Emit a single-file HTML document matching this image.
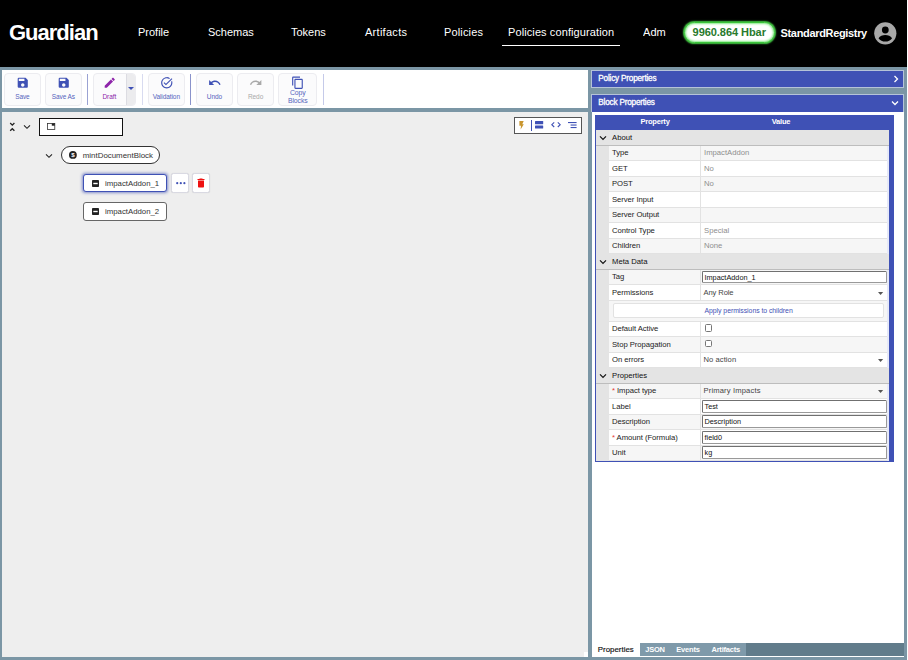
<!DOCTYPE html>
<html><head><meta charset="utf-8"><title>Guardian</title>
<style>
*{box-sizing:border-box;margin:0;padding:0}
html,body{width:908px;height:660px;overflow:hidden;background:#fff;font-family:"Liberation Sans",sans-serif;}
#page{position:absolute;left:0;top:0;width:907px;height:660px;background:#7b96a5;overflow:hidden}
.abs{position:absolute}
svg{overflow:visible}
#hdr{position:absolute;left:0;top:0;width:907px;height:67px;background:#000;color:#fff}
#logo{position:absolute;left:9px;top:19px;font-weight:bold;font-size:22px;line-height:28px;letter-spacing:-1px;white-space:nowrap}
.nav{position:absolute;top:25px;font-size:11px;line-height:14px;white-space:nowrap;color:#fff}
#bal{position:absolute;left:684px;top:22.3px;width:90.5px;height:21px;border-radius:11px;background:#fff;border:1.5px solid #3cc43c;box-shadow:0 0 1.5px 1px #45cc45, inset 0 0 2px 1px #8aea8a;color:#287a2c;font-weight:bold;font-size:11px;line-height:19.4px;letter-spacing:-0.05px;text-align:center;white-space:nowrap}
#user{position:absolute;left:780.5px;top:25.6px;font-weight:bold;font-size:11px;line-height:14px;white-space:nowrap;letter-spacing:-0.33px}
#left{position:absolute;left:2px;top:70px;width:586.2px;height:586.5px;background:#eeeeee}
#tb{position:absolute;left:0;top:0;width:586.2px;height:38.3px;background:#fff}
#tbline{position:absolute;left:0;top:38.3px;width:586.2px;height:3.5px;background:#7b96a5}
.btn{position:absolute;top:3px;height:33px;border:1px solid #ececf0;border-radius:4px;background:#fbfbfc;color:#5564bd;font-size:6.5px;text-align:center}
.btn svg{position:absolute;left:50%;top:1.5px;margin-left:-6.75px;width:13.5px;height:13.5px;fill:#3f51b5}
.btn span{position:absolute;left:0;right:0;top:18.5px;line-height:8px;white-space:nowrap;letter-spacing:-0.08px}
.sep{position:absolute;top:4px;width:1px;height:31px;background:#9aa2d3}
.node{position:absolute;background:#fff;border:1px solid #333;font-size:7.5px;color:#333;white-space:nowrap}
.node span{position:absolute;top:0;line-height:100%;}
#right{position:absolute;left:592px;top:70px;width:311.5px;height:586.5px;background:#fff}
.ph{position:absolute;left:-1px;width:312.9px;height:17.6px;background:#3f51b5;color:#fff;font-size:8.2px;line-height:15.2px;padding-left:6.3px;font-weight:normal;-webkit-text-stroke:0.3px #fff;letter-spacing:-0.2px;border:1px solid #b5c3d8}
#tbl{position:absolute;left:3px;top:45px;width:299px;height:346.6px;background:#3f51b5}
#tbl .in{position:absolute;left:1px;top:15.4px;width:293px;height:330.4px;background:linear-gradient(90deg,#e4e4e4 0,#e4e4e4 20px,#fff 20px,#fff 291.400px,#e6e9f8 291.400px);overflow:hidden}
.th{position:absolute;top:0;height:14.5px;line-height:14.5px;color:#fff;font-weight:bold;font-size:7.5px;letter-spacing:-0.2px;text-align:center}
.row{position:absolute;left:13px;width:278.4px;height:15.5px;border-bottom:1px solid #e2e2e2;font-size:7.7px;line-height:14.5px;color:#222;white-space:nowrap}
.row.o{background:#f6f6f6}
.row.e{background:#fff}
.row .k{position:absolute;left:3px;top:0.4px;letter-spacing:-0.05px}
.row .v{position:absolute;left:95px;top:0.4px;color:#8e8e8e}
.row .vs{position:absolute;left:94.5px;top:0.3px;color:#444;font-size:7.6px}
.row .cs{position:absolute;left:90.5px;top:0;width:1px;height:100%;background:#e2e2e2}
.grp{position:absolute;left:0;width:293px;height:15.5px;background:#e4e4e4;border-bottom:1px solid #bdbdbd;font-size:7.7px;line-height:14.5px;color:#111;white-space:nowrap}
.grp span{position:absolute;left:16px;top:0.4px}
.grp svg{position:absolute;left:3px;top:3.5px;width:8px;height:8px}
.inp{position:absolute;left:93px;top:0.7px;width:185px;height:12.7px;border:1px solid #858585;border-color:#707070 #999 #999 #707070;border-radius:1.5px;background:#fff;font-size:7.3px;line-height:11.3px;padding-left:1.5px;color:#111}
.chk{position:absolute;left:95.5px;top:2.5px;width:7.7px;height:7.7px;border:1px solid #777;border-radius:1.5px;background:#fff}
.dd{position:absolute;left:268.9px;top:6.5px;width:5.2px;height:2.9px}
.req{color:#e53935}
.tab{position:absolute;top:0;height:13.2px;line-height:13px;font-size:7.5px;font-weight:bold;color:#fff;background:#7f9aaa;text-align:center;letter-spacing:-0.2px}
</style></head><body><div id="page">
<div id="hdr">
 <div id="logo">Guardian</div>
 <div class="nav" style="left:138px">Profile</div>
 <div class="nav" style="left:208px">Schemas</div>
 <div class="nav" style="left:291px">Tokens</div>
 <div class="nav" style="left:365px;letter-spacing:0.28px">Artifacts</div>
 <div class="nav" style="left:444px;letter-spacing:0.14px">Policies</div>
 <div class="nav" style="left:508px;letter-spacing:0.1px">Policies configuration</div>
 <div class="abs" style="left:502px;top:44.500px;width:118px;height:1.500px;background:#fff"></div>
 <div class="nav" style="left:643px;width:23.100px;overflow:hidden;letter-spacing:0.05px">Admin</div>
 <div id="bal">9960.864 Hbar</div>
 <div id="user">StandardRegistry</div>
 <svg class="abs" style="left:873.500px;top:21.800px" width="22.600" height="22.600" viewBox="0 0 24 24"><circle cx="12" cy="12" r="11.800" fill="#a8a8a8"/><circle cx="12" cy="8.500" r="3.600" fill="#000"/><path d="M4.800 17.200c1.600-2.300 4.200-3.400 7.200-3.400s5.600 1.100 7.200 3.400c-1.700 2.300-4.300 3.600-7.200 3.600s-5.500-1.300-7.200-3.600z" fill="#000"/></svg>
</div>
<div id="left"><div id="tb">
<div class="btn" style="left:2px;width:36.8px;"><svg viewBox="0 0 24 24" style=""><path d="M17 3H5a2 2 0 0 0-2 2v14a2 2 0 0 0 2 2h14c1.100 0 2-.9 2-2V7l-4-4zm-5 16c-1.660 0-3-1.340-3-3s1.340-3 3-3 3 1.340 3 3-1.340 3-3 3zm3-10H5V5h10v4z"/></svg><span style="">Save</span></div>
<div class="btn" style="left:43px;width:36.8px;"><svg viewBox="0 0 24 24" style=""><path d="M17 3H5a2 2 0 0 0-2 2v14a2 2 0 0 0 2 2h14c1.100 0 2-.9 2-2V7l-4-4zm-5 16c-1.660 0-3-1.340-3-3s1.340-3 3-3 3 1.340 3 3-1.340 3-3 3zm3-10H5V5h10v4z"/></svg><span style="">Save As</span></div>
<div class="sep" style="left:85px"></div>
<div class="btn" style="left:91.300px;width:42.500px"><div class="abs" style="right:0;top:0;width:9.300px;height:31px;background:#ececee;border-left:1px solid #dcdce2;border-radius:0 3px 3px 0"></div><svg viewBox="0 0 24 24" style="left:15.800px;margin-left:-6.750px;fill:#8e24aa"><path d="M3 17.250V21h3.750L17.810 9.940l-3.750-3.750L3 17.250zM20.710 7.040a1 1 0 0 0 0-1.410l-2.340-2.340a1 1 0 0 0-1.410 0l-1.830 1.830 3.750 3.750 1.830-1.830z"/></svg><span style="right:10.500px;color:#8e24aa">Draft</span><div class="abs" style="left:33.800px;top:13px;width:0;height:0;border-left:3.100px solid transparent;border-right:3.100px solid transparent;border-top:3.100px solid #3f51b5"></div></div>
<div class="sep" style="left:140.300px;background:#d8dbf0"></div>
<div class="btn" style="left:146px;width:36.6px;"><svg viewBox="0 0 24 24" style=""><path d="M22 5.180 10.590 16.600l-4.240-4.240 1.410-1.410 2.830 2.830 10-10L22 5.180zm-2.210 5.040c.13.570.21 1.170.21 1.780 0 4.420-3.580 8-8 8s-8-3.580-8-8 3.580-8 8-8c1.580 0 3.040.46 4.280 1.250l1.440-1.440A9.900 9.900 0 0 0 12 2C6.480 2 2 6.480 2 12s4.480 10 10 10 10-4.480 10-10c0-1.190-.22-2.330-.6-3.390l-1.610 1.610z"/></svg><span style="">Validation</span></div>
<div class="sep" style="left:188.300px;background:#8a93cb"></div>
<div class="btn" style="left:194px;width:36.8px;"><svg viewBox="0 0 24 24" style=""><path d="M12.500 8c-2.650 0-5.050.99-6.900 2.600L2 7v9h9l-3.620-3.620c1.390-1.160 3.160-1.880 5.120-1.880 3.540 0 6.550 2.310 7.600 5.500l2.370-.78C21.080 11.030 17.150 8 12.500 8z"/></svg><span style="">Undo</span></div>
<div class="btn" style="left:235.2px;width:36.8px;"><svg viewBox="0 0 24 24" style="fill:#a9a9a9"><path d="M18.400 10.600C16.550 8.990 14.150 8 11.500 8c-4.650 0-8.580 3.030-9.960 7.220L3.900 16a8 8 0 0 1 7.600-5.500c1.950 0 3.730.72 5.120 1.880L13 16h9V7l-3.600 3.600z"/></svg><span style="color:#a9a9a9;">Redo</span></div>
<div class="btn" style="left:276.3px;width:39px;"><svg viewBox="0 0 24 24" style=""><path d="M16 1H4c-1.100 0-2 .9-2 2v14h2V3h12V1zm3 4H8c-1.100 0-2 .9-2 2v14c0 1.100.9 2 2 2h11c1.100 0 2-.9 2-2V7c0-1.100-.9-2-2-2zm0 16H8V7h11v14z"/></svg><span style="top:15.4px;line-height:7.6px;font-size:6.9px;white-space:normal;">Copy<br>Blocks</span></div>
<div class="sep" style="left:321px;background:#c5cae9"></div>
</div><div id="tbline"></div>
<svg class="abs" style="left:5px;top:52px" width="10" height="10" viewBox="0 0 10 10" fill="none" stroke="#222" stroke-width="1.300"><path d="M3.200 1 5.300 3.100 7.400 1M3.200 8.800 5.300 6.700 7.400 8.800"/></svg>
<svg class="abs" style="left:21px;top:53px" width="8" height="8" viewBox="0 0 8 8" fill="none" stroke="#222" stroke-width="1.100"><path d="M1 2.300 4 5.300 7 2.300"/></svg>
<div class="node" style="left:37px;top:48px;width:84px;height:17.500px;border-color:#111"><svg class="abs" style="left:7px;top:4.300px" width="8.200" height="7" viewBox="0 0 8.200 7"><rect x=".4" y=".4" width="7.400" height="6.200" fill="#fff" stroke="#333" stroke-width=".8"/><rect x="4.800" y=".4" width="3" height="2.300" fill="#222"/></svg></div>
<svg class="abs" style="left:42.700px;top:81.700px" width="8" height="8" viewBox="0 0 8 8" fill="none" stroke="#222" stroke-width="1.100"><path d="M1 2.300 4 5.300 7 2.300"/></svg>
<div class="node" style="left:58.800px;top:76.300px;width:99.400px;height:17.400px;border-radius:9px;line-height:15.400px"><svg class="abs" style="left:7.200px;top:3.800px" width="7.800" height="7.800" viewBox="0 0 10 10"><circle cx="5" cy="5" r="5" fill="#222"/><text x="5" y="8" font-size="8" font-weight="bold" text-anchor="middle" fill="#fff" font-family="Liberation Sans, sans-serif">$</text></svg><span style="left:21px;top:0.600px;line-height:15.400px;font-size:7.900px;letter-spacing:0">mintDocumentBlock</span></div>
<div class="node" style="left:81.200px;top:104.300px;width:84.200px;height:18px;border-radius:3px;border-color:#3f51b5;box-shadow:0 0 3px 0.500px rgba(63,81,181,.6)"><svg class="abs" style="left:7.800px;top:5.200px" width="7" height="7" viewBox="0 0 7 7"><rect width="7" height="7" rx=".8" fill="#222"/><rect x="1.300" y="2.800" width="4.400" height="1.400" fill="#fff"/></svg><span style="left:20.800px;top:0.700px;font-size:7.800px;line-height:16px">impactAddon_1</span></div>
<div class="abs" style="left:169.400px;top:102.800px;width:18px;height:19.800px;background:#fff;border:1px solid #d9d9e2;border-radius:2.500px;box-shadow:0 0 1px rgba(0,0,0,.15)"><svg class="abs" style="left:3.200px;top:7.800px" width="9.600" height="2.400" viewBox="0 0 9.600 2.400"><circle cx="1.200" cy="1.200" r="1.100" fill="#3f51b5"/><circle cx="4.800" cy="1.200" r="1.100" fill="#3f51b5"/><circle cx="8.400" cy="1.200" r="1.100" fill="#3f51b5"/></svg></div>
<div class="abs" style="left:190.200px;top:102.800px;width:18px;height:19.800px;background:#fff;border:1px solid #d9d9e2;border-radius:2.500px;box-shadow:0 0 1px rgba(0,0,0,.15)"><svg class="abs" style="left:2px;top:3px" width="12" height="12" viewBox="0 0 24 24"><path fill="#ee1111" d="M6 19c0 1.100.9 2 2 2h8c1.100 0 2-.9 2-2V7H6v12zM19 4h-3.500l-1-1h-5l-1 1H5v2h14V4z"/></svg></div>
<div class="node" style="left:81.200px;top:132.300px;width:84.200px;height:18.400px;border-radius:3px;border-color:#666"><svg class="abs" style="left:7.800px;top:5.200px" width="7" height="7" viewBox="0 0 7 7"><rect width="7" height="7" rx=".8" fill="#222"/><rect x="1.300" y="2.800" width="4.400" height="1.400" fill="#fff"/></svg><span style="left:20.800px;top:0.700px;font-size:7.800px;line-height:16.400px">impactAddon_2</span></div>
<div class="abs" style="left:512.100px;top:47.100px;width:67.700px;height:16.500px;background:#fff;border:1px solid #555"><svg class="abs" style="left:4.300px;top:2.800px" width="5" height="8.500" viewBox="0 0 5 8.500"><path d="M.4 0h4.300L3.300 3.200h1.500L1.600 8.500 2 4.700H.4z" fill="#c9962e"/></svg><div class="abs" style="left:16.300px;top:2.200px;width:1px;height:10.500px;background:#3f51b5"></div><svg class="abs" style="left:20px;top:3.300px" width="8.200" height="7.600" viewBox="0 0 8.200 7.600"><rect width="8.200" height="3.200" rx=".5" fill="#3f51b5"/><rect y="4.400" width="8.200" height="3.200" rx=".5" fill="#3f51b5"/></svg><svg class="abs" style="left:36px;top:4.400px" width="10" height="5.400" viewBox="0 0 10 5.400" fill="none" stroke="#3f51b5" stroke-width="1.100"><path d="M3.200.4.800 2.700l2.400 2.300M6.800.4l2.400 2.300L6.800 5"/></svg><svg class="abs" style="left:53.200px;top:4px" width="8.600" height="6.200" viewBox="0 0 8.600 6.200"><rect width="8.600" height="1.100" fill="#3f51b5"/><rect x="2.600" y="2.500" width="6" height="1.100" fill="#3f51b5"/><rect x="2.600" y="5" width="6" height="1.100" fill="#3f51b5"/></svg></div>
<div class="abs" style="left:581.700px;top:582px;width:4.500px;height:4.500px;background:#fff"></div>
</div>
<div id="right">
<div class="ph" style="top:0.200px">Policy Properties<svg class="abs" style="right:3.200px;top:3.500px" width="8" height="8" viewBox="0 0 8 8" fill="none" stroke="#fff" stroke-width="1.300"><path d="M2.500 1 5.500 4 2.500 7"/></svg></div>
<div class="abs" style="left:-1px;top:17.800px;width:314px;height:6.600px;background:#7b96a5"></div>
<div class="ph" style="top:24.400px;height:17.600px;border-bottom:none">Block Properties<svg class="abs" style="right:3.800px;top:4px" width="8" height="8" viewBox="0 0 8 8" fill="none" stroke="#fff" stroke-width="1.300"><path d="M1 2.500 4 5.500 7 2.500"/></svg></div>
<div id="tbl"><div class="th" style="left:14px;width:92px">Property</div><div class="th" style="left:146px;width:80px">Value</div><div class="in">
<div class="grp" style="top:0.0px"><svg viewBox="0 0 8 8" fill="none" stroke="#111" stroke-width="1.200"><path d="M1 2.300 4 5.300 7 2.300"/></svg><span>About</span></div>
<div class="row o" style="top:15.5px"><span class="k">Type</span><div class="cs"></div><span class="v">ImpactAddon</span></div>
<div class="row e" style="top:31.0px"><span class="k">GET</span><div class="cs"></div><span class="v">No</span></div>
<div class="row o" style="top:46.5px"><span class="k">POST</span><div class="cs"></div><span class="v">No</span></div>
<div class="row e" style="top:62.0px"><span class="k">Server Input</span><div class="cs"></div><span class="v"></span></div>
<div class="row o" style="top:77.5px"><span class="k">Server Output</span><div class="cs"></div><span class="v"></span></div>
<div class="row e" style="top:93.0px"><span class="k">Control Type</span><div class="cs"></div><span class="v">Special</span></div>
<div class="row o" style="top:108.5px"><span class="k">Children</span><div class="cs"></div><span class="v">None</span></div>
<div class="grp" style="top:124.0px"><svg viewBox="0 0 8 8" fill="none" stroke="#111" stroke-width="1.200"><path d="M1 2.300 4 5.300 7 2.300"/></svg><span>Meta Data</span></div>
<div class="row o" style="top:139.5px"><span class="k">Tag</span><div class="cs"></div><div class="inp">ImpactAddon_1</div></div>
<div class="row e" style="top:155.0px"><span class="k">Permissions</span><div class="cs"></div><span class="vs" style="letter-spacing:-0.11px">Any Role</span><svg class="dd" viewBox="0 0 5.2 2.9"><path d="M0 0h5.200L2.600 2.900z" fill="#555"/></svg></div>
<div class="row o" style="top:170.5px;height:20.800px"><div class="abs" style="left:3.500px;top:2.600px;width:271px;height:14.500px;border:1px solid #e2e2e2;border-radius:2px;background:#fff"></div><span class="abs" style="left:95.500px;top:2.700px;color:#3f51b5;font-size:6.900px;letter-spacing:-0.05px">Apply permissions to children</span></div>
<div class="row e" style="top:191.3px"><span class="k">Default Active</span><div class="cs"></div><div class="chk"></div></div>
<div class="row o" style="top:206.8px"><span class="k">Stop Propagation</span><div class="cs"></div><div class="chk"></div></div>
<div class="row e" style="top:222.3px"><span class="k">On errors</span><div class="cs"></div><span class="vs" style="letter-spacing:0.07px">No action</span><svg class="dd" viewBox="0 0 5.2 2.9"><path d="M0 0h5.200L2.600 2.900z" fill="#555"/></svg></div>
<div class="grp" style="top:237.8px"><svg viewBox="0 0 8 8" fill="none" stroke="#111" stroke-width="1.200"><path d="M1 2.300 4 5.300 7 2.300"/></svg><span>Properties</span></div>
<div class="row o" style="top:253.3px"><span class="k"><span class="req">* </span>Impact type</span><div class="cs"></div><span class="vs" style="letter-spacing:0.15px">Primary Impacts</span><svg class="dd" viewBox="0 0 5.2 2.9"><path d="M0 0h5.200L2.600 2.900z" fill="#555"/></svg></div>
<div class="row e" style="top:268.8px"><span class="k">Label</span><div class="cs"></div><div class="inp">Test</div></div>
<div class="row o" style="top:284.3px"><span class="k">Description</span><div class="cs"></div><div class="inp">Description</div></div>
<div class="row e" style="top:299.8px"><span class="k"><span class="req">* </span>Amount (Formula)</span><div class="cs"></div><div class="inp">field0</div></div>
<div class="row o" style="top:315.3px"><span class="k">Unit</span><div class="cs"></div><div class="inp">kg</div></div>
</div></div>
<div class="abs" style="left:0;top:573.300px;width:311.500px;height:13.200px;background:#617c8b"><div class="tab" style="left:0;width:47.500px;background:#fff;color:#111;font-weight:normal;font-size:7.900px;letter-spacing:0;-webkit-text-stroke:0.15px #111">Properties</div><div class="tab" style="left:47.500px;width:31px">JSON</div><div class="tab" style="left:78.500px;width:35px">Events</div><div class="tab" style="left:113.500px;width:40.500px">Artifacts</div></div>
</div>
</div></body></html>
